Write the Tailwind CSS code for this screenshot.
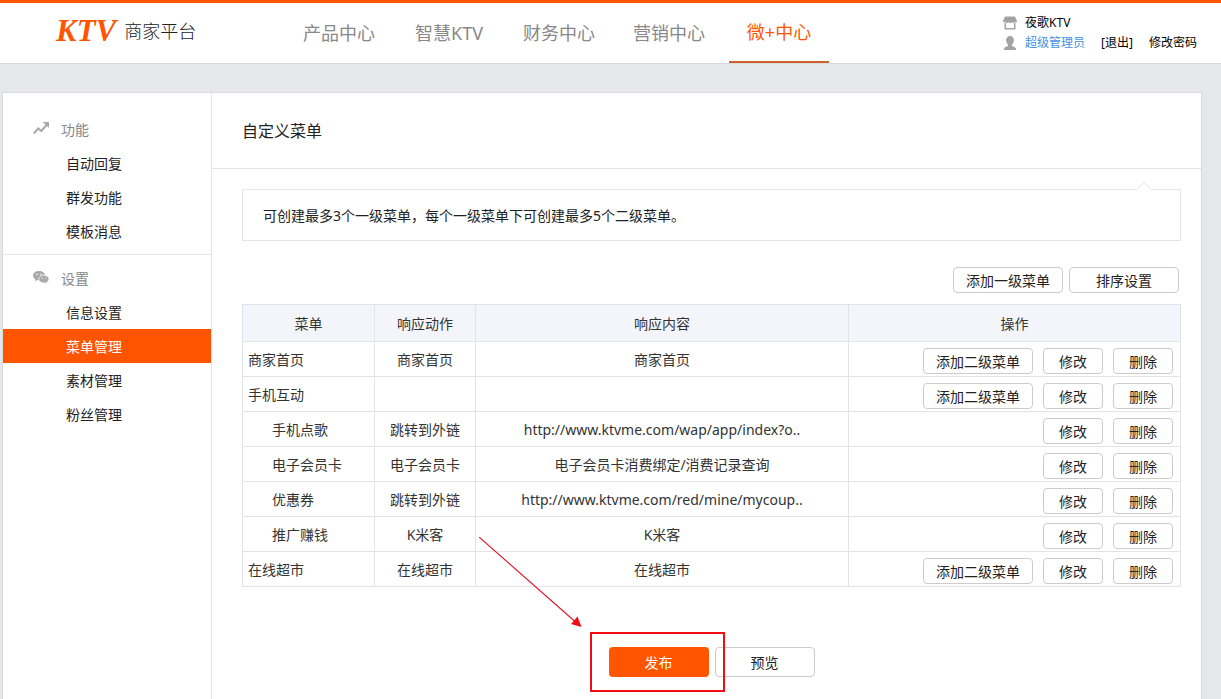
<!DOCTYPE html>
<html lang="zh-CN">
<head>
<meta charset="utf-8">
<title>自定义菜单 - KTV商家平台</title>
<script src="https://cdn.jsdelivr.net/npm/@tailwindcss/browser@4"></script>
</head>
<body class="flex min-h-screen flex-col overflow-x-hidden bg-[#e5e7eb] font-['Noto_Sans','Noto_Sans_CJK_SC',sans-serif] text-sm text-[#222]">
<header class="flex h-16 items-stretch border-t-3 border-b border-t-[#ff5500] border-b-[#d9dbdb] bg-white">
  <a href="#" class="flex w-[289px] shrink-0 items-center gap-2 pb-1 pl-14">
    <span class="font-['Liberation_Serif',serif] text-[31px] leading-8 font-bold text-[#ff5500] italic">KTV</span>
    <span class="text-lg font-light text-[#222]">商家平台</span>
  </a>
  <nav class="flex gap-2.5 text-lg text-[#888]">
    <a href="#" class="flex w-25 items-center justify-center">产品中心</a>
    <a href="#" class="flex w-25 items-center justify-center">智慧KTV</a>
    <a href="#" class="flex w-25 items-center justify-center">财务中心</a>
    <a href="#" class="flex w-25 items-center justify-center">营销中心</a>
    <a href="#" aria-current="page" class="flex w-25 items-center justify-center border-b-2 border-[#cf6030] text-[#ff5500]">微+中心</a>
  </nav>
  <div class="ml-auto flex flex-col pt-[9px] pr-6 text-xs text-black">
    <div class="flex h-[21px] items-center gap-2">
      <svg class="size-3.5" viewBox="0 0 14 14" fill="#a3a3a3"><path d="M2 0.5h10L14 5v.6a1.3 1.3 0 0 1-2.5 0 1.5 1.5 0 0 1-3 0 1.5 1.5 0 0 1-3 0 1.5 1.5 0 0 1-3 0A1.3 1.3 0 0 1 0 5.600V5z"/><path d="M1.500 7h1.500v5h8V7h1.500v6.500h-11z"/></svg>
      <span>夜歌KTV</span>
    </div>
    <div class="flex h-5 items-center">
      <svg class="mr-2 size-3.5" viewBox="0 0 14 14" fill="#a3a3a3"><path d="M7 0a3.900 3.900 0 0 1 3.900 4c0 1.900-.7 3.500-1.900 4.500v1.300c.6 1 4 1.200 4 3.300v.9H1v-.9c0-2.100 3.400-2.300 4-3.300V8.500C3.800 7.500 3.100 5.900 3.100 4A3.900 3.900 0 0 1 7 0z"/></svg>
      <a href="#" class="text-[#4490e0]">超级管理员</a>
      <a href="#" class="ml-4">[退出]</a>
      <a href="#" class="ml-4">修改密码</a>
    </div>
  </div>
</header>

<div class="mt-7 mr-[19px] ml-0.5 flex grow border border-b-0 border-[#d9dbdb] bg-white">
  <aside class="w-[209px] shrink-0 border-r border-[#e4e4e6]">
    <section class="border-b border-[#e4e4e6] pt-5 pb-[5px]">
      <h2 class="flex h-[34px] items-center pl-[30px] text-[#888]">
        <svg class="mr-3 mb-1 size-4" viewBox="0 0 16 16"><path d="M.8 13.500l4.500-5 3 2.500L13.500 5" fill="none" stroke="#a9a9a9" stroke-width="2"/><path d="M9.800 2H16v6z" fill="#a9a9a9"/></svg>功能</h2>
      <ul>
        <li><a href="#" class="flex h-[34px] items-center pl-[63px]">自动回复</a></li>
        <li><a href="#" class="flex h-[34px] items-center pl-[63px]">群发功能</a></li>
        <li><a href="#" class="flex h-[34px] items-center pl-[63px]">模板消息</a></li>
      </ul>
    </section>
    <section class="pt-1.5">
      <h2 class="flex h-[34px] items-center pt-0.5 pl-[30px] text-[#888]">
        <svg class="mr-3 mb-1 size-4" viewBox="0 0 16 16"><g fill="#a9a9a9"><path d="M6 2c3.300 0 6 2.100 6 4.700S9.300 11.300 6 11.300c-.6 0-1.200-.1-1.800-.2L2 12.300l.5-1.900C1 9.500 0 8.200 0 6.700 0 4.100 2.700 2 6 2z"/><path d="M10.900 6.200c2.900 0 5.100 1.700 5.100 3.900 0 1.300-.8 2.400-1.900 3.100l.3 1.400-1.700-.8c-.6.1-1.100.2-1.800.2-2.800 0-5.100-1.700-5.100-3.900s2.300-3.900 5.100-3.900z" stroke="#fff" stroke-width=".7"/></g><g fill="#fff"><circle cx="4" cy="5.300" r=".8"/><circle cx="8" cy="5.300" r=".8"/><circle cx="9.300" cy="9" r=".6"/><circle cx="12.600" cy="9" r=".6"/></g></svg>设置</h2>
      <ul>
        <li><a href="#" class="flex h-[34px] items-center pt-0.5 pl-[63px]">信息设置</a></li>
        <li><a href="#" aria-current="page" class="flex h-[34px] items-center bg-[#ff5500] pt-0.5 pl-[63px] text-white">菜单管理</a></li>
        <li><a href="#" class="flex h-[34px] items-center pt-0.5 pl-[63px]">素材管理</a></li>
        <li><a href="#" class="flex h-[34px] items-center pt-0.5 pl-[63px]">粉丝管理</a></li>
      </ul>
    </section>
  </aside>

  <main class="min-w-0 grow">
    <h1 class="flex h-19 items-center border-b border-[#e4e4e6] px-[30px] text-base">自定义菜单</h1>
    <div class="pt-5 pr-5 pb-5 pl-[30px]">
      <div class="relative flex h-[52px] items-center border border-[#e4e4e6] px-5 pt-0.5">
        <p>可创建最多3个一级菜单，每个一级菜单下可创建最多5个二级菜单。</p>
        <svg class="absolute -top-2 right-7 h-2 w-4" viewBox="0 0 16 8"><path d="M0 8L8 0.500L16 8" fill="#fff" stroke="#e4e4e6"/></svg>
      </div>
      <div class="mt-[26px] mr-0.5 flex justify-end gap-1.5">
        <button type="button" class="h-[26px] w-[110px] rounded border border-[#ccc] bg-white pt-0.5">添加一级菜单</button>
        <button type="button" class="h-[26px] w-[110px] rounded border border-[#ccc] bg-white pt-0.5">排序设置</button>
      </div>

      <table class="mt-[11px] w-full table-fixed border-collapse text-center text-[#333] [&_button]:h-[26px] [&_button]:rounded [&_button]:border [&_button]:border-[#ccc] [&_button]:bg-white [&_button]:pt-0.5 [&_button]:text-[#222] [&_td]:h-[35px] [&_td]:border [&_td]:border-[#e1e3e6] [&_td]:p-0 [&_td]:pt-0.5 [&_th]:h-[37px] [&_th]:border [&_th]:border-[#e1e3e6] [&_th]:bg-[#f3f5fa] [&_th]:p-0 [&_th]:pt-0.5 [&_th]:font-normal">
        <colgroup><col class="w-[132px]"><col class="w-[101px]"><col class="w-[373px]"><col></colgroup>
        <thead><tr><th scope="col">菜单</th><th scope="col">响应动作</th><th scope="col">响应内容</th><th scope="col">操作</th></tr></thead>
        <tbody>
          <tr><td><div class="pl-[5px] text-left">商家首页</div></td><td>商家首页</td><td>商家首页</td><td><div class="flex justify-end gap-2.5 pt-0.5 pr-[7px]"><button type="button" class="w-[110px]">添加二级菜单</button><button type="button" class="w-15">修改</button><button type="button" class="w-15">删除</button></div></td></tr>
          <tr><td><div class="pl-[5px] text-left">手机互动</div></td><td></td><td></td><td><div class="flex justify-end gap-2.5 pt-0.5 pr-[7px]"><button type="button" class="w-[110px]">添加二级菜单</button><button type="button" class="w-15">修改</button><button type="button" class="w-15">删除</button></div></td></tr>
          <tr><td><div class="pl-[29px] text-left">手机点歌</div></td><td>跳转到外链</td><td>http://www.ktvme.com/wap/app/index?o..</td><td><div class="flex justify-end gap-2.5 pt-0.5 pr-[7px]"><button type="button" class="w-15">修改</button><button type="button" class="w-15">删除</button></div></td></tr>
          <tr><td><div class="pl-[29px] text-left">电子会员卡</div></td><td>电子会员卡</td><td>电子会员卡消费绑定/消费记录查询</td><td><div class="flex justify-end gap-2.5 pt-0.5 pr-[7px]"><button type="button" class="w-15">修改</button><button type="button" class="w-15">删除</button></div></td></tr>
          <tr><td><div class="pl-[29px] text-left">优惠券</div></td><td>跳转到外链</td><td>http://www.ktvme.com/red/mine/mycoup..</td><td><div class="flex justify-end gap-2.5 pt-0.5 pr-[7px]"><button type="button" class="w-15">修改</button><button type="button" class="w-15">删除</button></div></td></tr>
          <tr><td><div class="pl-[29px] text-left">推广赚钱</div></td><td>K米客</td><td>K米客</td><td><div class="flex justify-end gap-2.5 pt-0.5 pr-[7px]"><button type="button" class="w-15">修改</button><button type="button" class="w-15">删除</button></div></td></tr>
          <tr><td><div class="pl-[5px] text-left">在线超市</div></td><td>在线超市</td><td>在线超市</td><td><div class="flex justify-end gap-2.5 pt-0.5 pr-[7px]"><button type="button" class="w-[110px]">添加二级菜单</button><button type="button" class="w-15">修改</button><button type="button" class="w-15">删除</button></div></td></tr>
        </tbody>
      </table>

      <div class="mt-15 flex justify-center gap-1.5">
        <div class="relative z-10">
          <button type="button" class="h-[30px] w-25 rounded bg-[#ff5500] pt-0.5 text-white">发布</button>
          <div class="pointer-events-none absolute -top-[15px] -left-[19px] h-[60px] w-[135px] border-2 border-[#f00d13]"></div>
          <svg class="pointer-events-none absolute -top-[110px] -left-[130px] h-[91px] w-[103px]" viewBox="0 0 103 91"><path d="M0 0L96 84.500" stroke="#e0142a" stroke-width="1.100"/><path d="M102.500 90L92 87L98.500 79.500z" fill="#f00d13"/></svg>
        </div>
        <button type="button" class="h-[30px] w-25 rounded border border-[#ccc] bg-white pt-0.5">预览</button>
      </div>
    </div>
  </main>
</div>
</body>
</html>
